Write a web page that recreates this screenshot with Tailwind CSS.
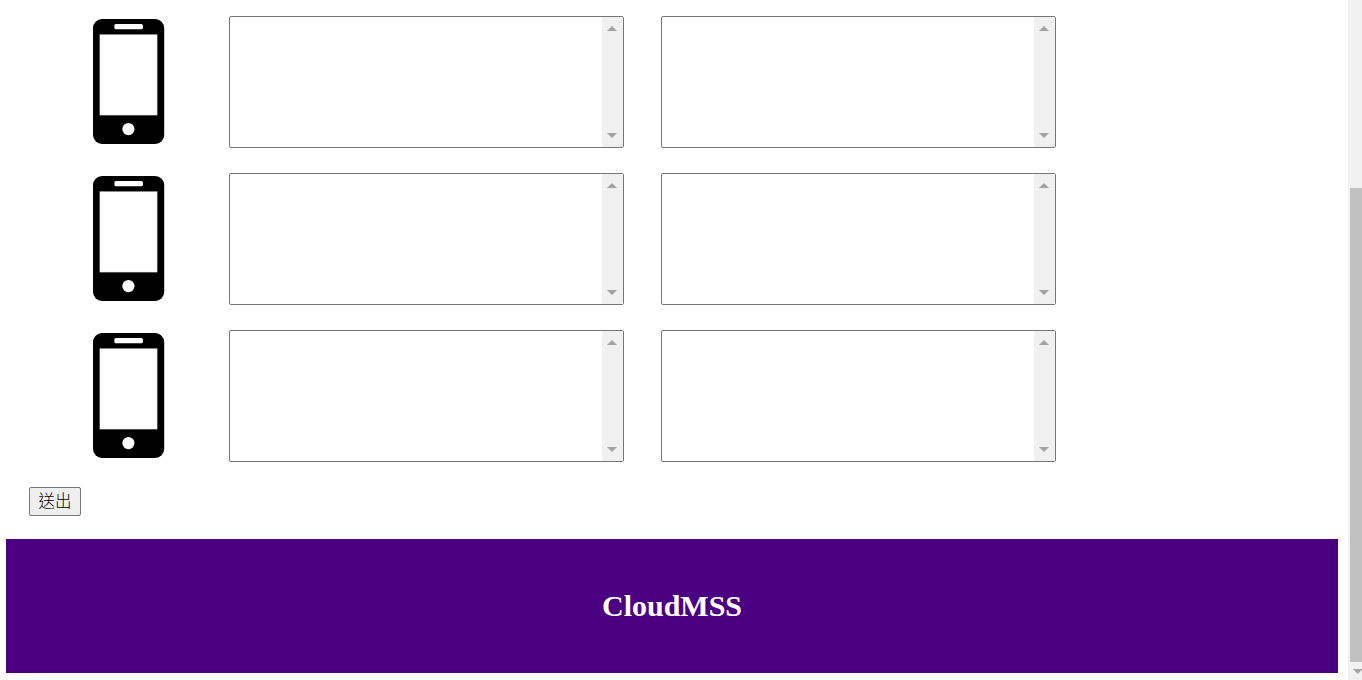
<!DOCTYPE html>
<html lang="zh-Hant">
<head>
<meta charset="utf-8">
<title>CloudMSS</title>
<script src="https://cdn.jsdelivr.net/npm/@tailwindcss/browser@4"></script>
</head>
<body class="bg-white">
<svg class="hidden">
  <symbol id="phone" viewBox="0 0 72 125">
    <rect x="0" width="71.2" height="125" rx="9" fill="#000"/>
    <rect x="21.4" y="5" width="28.5" height="5.2" rx="1.5" fill="#fff"/>
    <rect x="6.8" y="15.4" width="57.4" height="80.8" fill="#fff" stroke="#777" stroke-width=".5"/>
    <circle cx="35.4" cy="110.1" r="6.1" fill="#fff"/>
  </symbol>
  <symbol id="up" viewBox="0 0 10 5"><path d="M5 0L10 5H0Z" fill="#a3a3a3"/></symbol>
  <symbol id="down" viewBox="0 0 10 5"><path d="M0 0H10L5 5Z" fill="#a3a3a3"/></symbol>
</svg>
<div class="flex h-[680px] w-[1362px] overflow-hidden">
  <main class="flex w-[1348px] flex-col pt-4 pl-1.5">
    <form class="flex flex-col pl-[23px]">
      <div id="rows" class="flex flex-col gap-[25px] pl-16">
        <template id="row">
          <div class="flex h-[132px]">
            <svg class="mt-[3px] mr-16 h-[125px] w-[72px]"><use href="#phone"/></svg>
            <div class="mr-[37px] flex w-[395px] justify-end rounded-[2px] border border-[#767676]">
              <div class="flex w-[21px] flex-col items-center justify-between bg-[#f0f0f0] py-[9px] pr-px">
                <svg class="h-[5px] w-2.5"><use href="#up"/></svg>
                <svg class="h-[5px] w-2.5"><use href="#down"/></svg>
              </div>
            </div>
            <div class="flex w-[395px] justify-end rounded-[2px] border border-[#767676]">
              <div class="flex w-[21px] flex-col items-center justify-between bg-[#f0f0f0] py-[9px] pr-px">
                <svg class="h-[5px] w-2.5"><use href="#up"/></svg>
                <svg class="h-[5px] w-2.5"><use href="#down"/></svg>
              </div>
            </div>
          </div>
        </template>
      </div>
      <button type="button" class="mt-[25px] flex h-[29px] w-[52px] items-center justify-center rounded-[2px] border border-[#767676] bg-[#efefef] font-['Liberation_Sans','Noto_Sans_CJK_TC',sans-serif] text-[16.5px] leading-none font-light text-black">送出</button>
    </form>
    <footer class="mt-[23px] flex h-[134px] w-[1332px] items-center justify-center bg-[#4b0082]">
      <h2 class="font-['Liberation_Serif',serif] text-[30px] leading-9 font-bold text-white">CloudMSS</h2>
    </footer>
  </main>
  <aside class="flex w-3.5 flex-col bg-[#f1f1f1] pt-[188px] pl-0.5">
    <div class="h-[474px] w-3 bg-[#c1c1c1]"></div>
    <svg class="mt-[7px] ml-[3px] h-[5px] w-[9px]" viewBox="0 0 9 5"><path d="M0 0H9V.5L4.8 5Z" fill="#a3a3a3"/></svg>
  </aside>
</div>
<script>
  const rows = document.getElementById('rows');
  const row = document.getElementById('row');
  for (let i = 0; i < 3; i++) rows.append(row.content.cloneNode(true));
  row.remove();
</script>
</body>
</html>
